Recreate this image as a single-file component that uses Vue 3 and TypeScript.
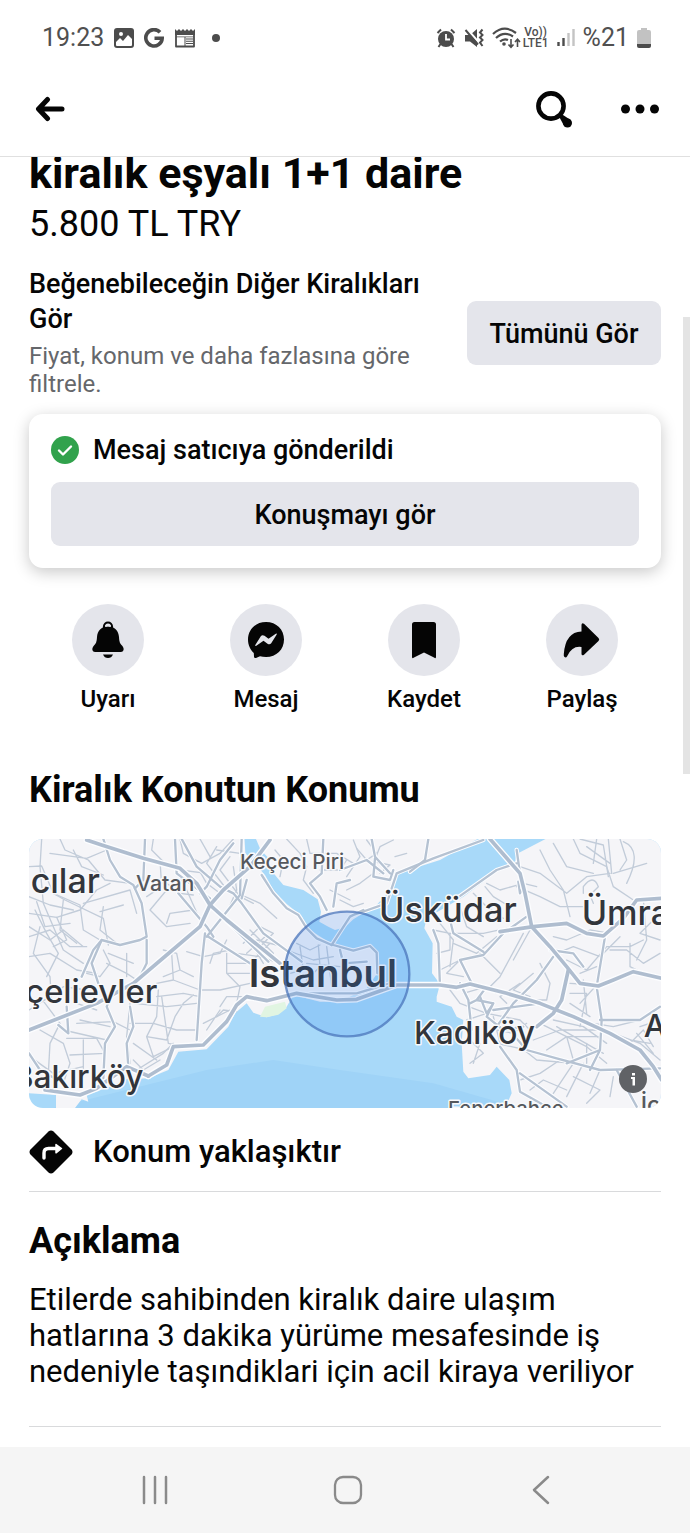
<script setup lang="ts">
interface MapLabel {
  text: string
  x: number
  y: number
  size: number
  weight: number
}

const actions = [
  { id: 'alert', label: 'Uyarı' },
  { id: 'message', label: 'Mesaj' },
  { id: 'save', label: 'Kaydet' },
  { id: 'share', label: 'Paylaş' },
]

const land = [
  'M0 0H672L676 70L700 95L735 135L760 180L800 222L845 258L862 290L885 310L920 332L955 347L1000 362L1050 348L1070 365L1072 430L1040 475L960 515L900 515L820 495L800 530L775 552L740 562L700 548L680 520L645 550L625 590L560 658L475 665L445 720L385 745L320 748L270 770L200 795L205 815L185 808L165 834H108V795L27 790H0Z',
  'M705 20L722 60L742 80L750 115L765 135L790 165L850 180L893 208L903 245L898 275L925 290L945 300L975 292L1000 268L1070 225L1110 180L1135 130L1260 90L1385 20Z',
  'M1590 20L1490 72L1484 102L1430 118L1390 155L1330 200L1220 265L1213 295L1238 340L1236 430L1260 462L1250 500L1250 515L1295 530L1310 560L1330 570L1325 640L1330 725L1345 745L1410 735L1430 710L1468 750L1475 790L1455 834H1960V0H1600Z',
]

const minorRoads = [
  'M27 110L65 108L100 190L135 210L250 265L265 345M65 27L60 110L70 220L100 290L130 360L190 400M27 200L90 225L160 240M27 250L110 262L180 240L230 180L270 160',
  'M90 70L200 85L260 60M120 27L135 60L205 90L255 150L330 160M160 60L185 110L250 135M100 190L180 225L190 300L240 330M45 240L80 310L115 370L80 440',
  'M27 320L90 300L150 350L200 350M27 380L90 370L170 420L230 430M60 290L40 370L90 440L95 520M110 262L140 330L100 350M27 290L90 330L130 300L190 350M50 215L75 290L150 280M130 210L120 300L170 340',
  'M190 220L330 180L350 250M250 230L240 300L290 340M310 225L240 245M380 150L440 160L480 190L520 195M420 90L425 170L380 200M375 80L480 120L560 130M400 27L395 60L440 105',
  'M470 120L500 180L540 270M440 180L390 240L440 290L510 280M520 90L560 160L600 190M590 50L560 100L610 165M480 27L490 70L545 100L600 70L640 27M540 27L570 80',
  'M630 80L600 120L660 200L700 220M640 110L650 180L620 250M665 195L720 220L770 265M590 60L660 70M520 240L450 250L440 280',
  'M430 360L470 370L480 420L520 440M455 370L460 450L410 460M500 365L550 380L600 370L620 330M460 450L540 480L600 480L690 460M480 420L430 440',
  'M415 480L410 560L380 620L440 630L465 560L490 520L520 495M340 520L440 530L530 520M330 580L400 580L470 600L530 600M410 500L490 490L540 500M425 500L445 640L490 650M380 620L400 680L460 650',
  'M620 370L620 430L660 470L650 520M620 400L690 400M620 430L690 430M600 530L620 500L680 500M590 560L610 540L650 545M570 400L580 370L630 360',
  'M670 340L720 290L760 310L720 350M680 310L745 380M690 300L760 370M710 330L770 345M650 370L720 380L780 400M700 350L730 400M735 320L680 370M750 340L700 390',
  'M27 540L90 500L130 470L200 480M60 600L130 640L150 700L130 760M130 600L260 630M140 625L230 625L255 670L150 675M60 500L120 580L90 640L85 730M30 680L100 730L190 710',
  'M160 470L170 520L230 540M170 580L280 575L330 600M180 570L270 590M190 630L190 740M260 400L320 430L350 450M250 360L270 400L240 440L200 430M320 370L320 440M265 370L340 400',
  'M330 520L320 620L330 700M350 720L430 670L460 640M340 640L410 690M340 690L370 720L420 690M560 600L600 540M550 580L630 540',
  'M765 60L790 90L780 140M800 27L840 70L860 110L850 150L880 190M860 27L870 70L950 70L1000 100M980 180L1020 160L1060 130M1000 30L1020 80L980 140M900 120L960 120L980 90',
  'M1010 55L1040 90L1070 70L1040 30M1060 95L1110 105L1080 130M1120 30L1080 50L1060 100M1125 80L1160 70M960 210L1000 230L1030 220M930 180L990 210',
  'M830 340L870 360L900 345M800 360L880 390L940 380M840 350L850 420L810 430M895 345L900 410L860 450M920 350L935 470M860 400L960 410',
  'M1240 300L1290 310L1290 360L1250 370M1260 280L1300 330L1290 410M1290 310L1390 310L1460 295M1320 230L1340 290L1390 320M1360 190L1400 230L1450 265M1395 170L1420 200L1470 230M1300 340L1370 370L1430 320',
  'M1260 420L1320 390M1320 390L1280 430L1330 440M1510 310L1440 440L1410 470M1530 300L1480 390M1380 370L1440 430M1400 160L1440 180L1510 160L1550 170',
  'M1500 110L1560 130L1640 190L1700 140L1770 130M1490 170L1560 200L1620 230L1690 230M1560 60L1590 120L1630 180L1650 260M1600 40L1640 110L1720 130M1660 27L1680 70L1760 110L1780 170L1840 210',
  'M1680 27L1750 45L1765 140M1700 50L1770 100M1730 27L1720 100M1765 27L1775 130M1800 27L1820 90L1800 120M1690 190L1690 170Q1720 130 1735 170L1710 195L1720 220M1780 130L1880 100M1810 35Q1870 60 1820 160',
  'M1600 320L1640 330L1710 300L1770 310M1610 370L1660 350L1740 380L1800 320M1640 390L1700 420L1760 350L1830 350L1870 330M1680 430L1730 410M1770 360L1820 360L1870 400L1920 370M1830 340L1830 410L1870 430M1870 210L1880 330L1850 390M1910 260L1860 310L1920 330',
  'M1560 400L1590 460L1580 510L1530 510M1540 430L1480 480L1530 500M1650 460L1730 465L1680 520M1650 490L1700 490L1680 590M1690 450L1700 550M1650 520L1710 560M1720 580L1780 590L1860 570M1500 460L1440 500L1460 520',
  'M1330 490L1400 470L1430 490M1290 480L1320 520L1400 550M1340 570L1400 550L1500 570L1530 600M1380 640L1360 700M1420 560L1440 640M1350 630L1390 670L1350 700M1430 600L1480 610L1520 580M1430 640L1520 660',
  'M1560 580L1700 650L1760 700M1600 570L1690 590L1760 640M1540 630L1620 600L1740 600M1580 660L1640 620L1660 690M1640 620L1740 620M1610 590L1750 670M1660 700L1600 790M1690 700L1640 800M1740 720L1710 790',
  'M1500 750L1560 730L1620 690M1530 780L1570 750L1640 780M1660 740L1740 780L1700 820M1780 740L1770 800M1500 650L1550 690L1660 700M1700 640L1700 700M1780 610L1860 640L1920 690M1830 640L1870 600L1900 650M1850 610L1900 670M1860 590L1920 570M1830 630L1890 640',
]

const streets = [
  'M250 27L270 90L300 140L340 165L365 220L380 320L360 330L300 345L245 330L220 360L185 440',
  'M375 27L370 150L345 175M465 27L470 130L570 205M485 27L530 110L600 170L640 190L665 220L730 310L845 395',
  'M640 40L600 90L560 170L540 190M665 27L660 195L560 320M245 330L215 400L235 460M565 320L690 400M565 220L745 395M475 190L560 290L580 320',
  'M555 310L545 400L530 630M285 470L260 530L285 590L255 640L250 745M330 530L340 590L320 640L325 710M140 530L145 610L115 585',
  'M27 670L60 720L130 760M380 330L380 400L345 470M680 150L665 205M725 135L760 190L800 235L835 255L860 295L890 325L935 345',
  'M910 27L905 130L870 160L900 200L920 240M990 150L950 160L940 230M1055 27L1065 80L1110 130M1225 27L1215 90L1170 125M960 120L1040 90L1090 130M1065 85L1060 140L1110 150L1120 120',
  'M1000 255L1100 220L1130 130L1240 85L1390 30M935 345L990 260L1030 240M940 345L1000 362L1050 348L1070 368L1072 430M960 360L970 400L1040 395M870 490L1010 490L1110 460',
  'M1240 300L1255 340L1260 470M1290 270L1300 310L1390 365M1490 100L1430 120L1310 205M1510 170L1500 190L1495 155M1490 60L1500 130M1320 390L1390 375L1450 310L1520 260M1320 390L1355 460',
  'M1320 460L1345 510L1355 600M1400 470L1370 510L1350 520M1370 510L1420 520L1400 550L1380 500M1420 520L1400 560L1450 600L1510 590',
  'M1420 540L1560 520M1600 380L1550 450L1480 520L1430 590M1755 320L1730 470L1745 570L1740 660L1710 720M1740 570L1860 570L1920 530M1790 720L1850 830M1740 660L1640 700',
  'M1485 620L1520 660L1610 685L1740 720L1920 715M1440 650L1490 720L1500 785L1580 830M1500 730L1640 830M1690 410L1660 370L1590 360',
]

const highways = [
  'M200 30L245 45L370 85L480 115L530 160L570 225L620 270L780 400',
  'M750 30L690 110L610 180L570 225L540 290L440 375L340 460L230 520L27 600',
  'M385 738L440 705L460 650L550 645L620 575L650 525L680 500L740 512L830 490L950 510L1010 508L1130 465L1260 465L1310 472L1350 462L1460 490L1560 520L1660 560L1770 610L1860 660L1900 710L1925 750',
  'M75 780L180 795L230 775L320 710L385 738',
  'M1410 27L1500 130L1515 190L1535 290L1590 350L1640 410L1680 460L1735 468L1780 450L1840 425L1925 445',
  'M1440 305L1540 290L1640 280L1700 310L1750 318L1810 265L1850 210L1925 205M1645 420L1625 510L1600 550L1550 590',
]

const labels: MapLabel[] = [
  { text: 'cılar', x: 32, y: 190, size: 102, weight: 500 },
  { text: 'Vatan', x: 348, y: 183, size: 64, weight: 500 },
  { text: 'Keçeci Piri', x: 660, y: 117, size: 62, weight: 500 },
  { text: 'Üsküdar', x: 1077, y: 275, size: 103, weight: 500 },
  { text: 'Ümraniye', x: 1685, y: 285, size: 103, weight: 500 },
  { text: 'Istanbul', x: 686, y: 470, size: 115, weight: 600 },
  { text: 'çelievler', x: 16, y: 518, size: 98, weight: 500 },
  { text: 'Bakırköy', x: -22, y: 775, size: 95, weight: 500 },
  { text: 'Kadıköy', x: 1182, y: 642, size: 95, weight: 500 },
  { text: 'A', x: 1871, y: 620, size: 95, weight: 500 },
  { text: 'Fenerbahçe', x: 1284, y: 858, size: 61, weight: 500 },
  { text: 'İç', x: 1862, y: 848, size: 70, weight: 500 },
]
</script>

<template>
  <div class="phone">
    <div class="status">
      <div class="status-side">
        <span class="clock">19:23</span>
        <svg width="20" height="20" viewBox="0 0 20 20">
          <rect width="20" height="20" rx="3" fill="#4c4c4c" />
          <circle cx="7" cy="6" r="2" fill="#fff" />
          <path d="M2 14L6 10L9 13L14 7L18 11V17Q18 18 17 18H3Q2 18 2 17Z" fill="#fff" />
        </svg>
        <svg width="20" height="20" viewBox="0 0 20 20">
          <path d="M16 4.2A8.2 8.2 0 1 0 18.2 10.2H10.5" fill="none" stroke="#4c4c4c" stroke-width="3.6" />
        </svg>
        <svg width="22" height="20" viewBox="0 0 22 20">
          <path d="M2 3V18.500H20V3" fill="none" stroke="#4c4c4c" stroke-width="1.800" stroke-linejoin="round" />
          <path d="M1 7V1L3 3L5 1L7 3L9 1L11 3L13 1L15 3L17 1L19 3L21 1V7ZM12 10.500H19V11.500H12ZM12 12.800H19V13.800H12ZM12 15.100H19V16.100H12ZM10.500 9H11.500V18H10.500ZM2 8.500H20V9.300H2Z" fill="#4c4c4c" />
        </svg>
        <span class="dot"></span>
      </div>
      <div class="status-side status-right">
        <svg width="20" height="20" viewBox="0 0 20 20">
          <circle cx="10" cy="11" r="8" fill="#4c4c4c" />
          <path d="M1.500 5L5 1.500M18.500 5L15 1.500M4.500 16L2.500 19M15.500 16L17.500 19" stroke="#4c4c4c" stroke-width="2" />
          <path d="M10 6V11.500H14" fill="none" stroke="#fff" stroke-width="1.800" />
        </svg>
        <svg width="20" height="20" viewBox="0 0 20 20">
          <path d="M1 7H6L13 1V19L6 13.500H1Z" fill="#4c4c4c" />
          <path d="M2 0L14 13.500" stroke="#fff" stroke-width="2.400" />
          <path d="M1.500 2L14 16.500M18.500 1.500L16 4.500L18.500 7L16 9.500L18.500 12L16 14.500L18.500 18" fill="none" stroke="#4c4c4c" stroke-width="2" />
        </svg>
        <div class="network">
          <svg width="29" height="22" viewBox="0 0 29 22">
            <path d="M1 7Q12 -3 24 6M4 11Q12 3.500 21 9.500M8 14.500Q12 11 16 13" fill="none" stroke="#4c4c4c" stroke-width="2.200" />
            <circle cx="12" cy="17" r="1.800" fill="#4c4c4c" />
            <path d="M19 12V20M16.500 17.500L19 20.300L21.500 17.500M25.500 20V12.500M23 15L25.500 12.200L28 15" fill="none" stroke="#4c4c4c" stroke-width="1.600" />
          </svg>
          <span class="lte"><span>Vo))</span><span>LTE1</span></span>
        </div>
        <svg width="18" height="19" viewBox="0 0 18 19">
          <path d="M1.500 14V18M6.500 10V18" stroke="#4c4c4c" stroke-width="2.400" />
          <path d="M11.500 5V18M16.500 1V18" stroke="#c4c4c4" stroke-width="2.400" />
        </svg>
        <span class="battery-text">%21</span>
        <svg width="14" height="20" viewBox="0 0 14 20">
          <path d="M4 0H10V2H12Q14 2 14 4V16H0V4Q0 2 2 2H4Z" fill="#c2c2c2" />
          <path d="M0 16H14V18Q14 20 12 20H2Q0 20 0 18Z" fill="#4c4c4c" />
        </svg>
      </div>
    </div>

    <header class="topbar">
      <button class="icon-button" type="button" aria-label="Geri">
        <svg width="30" height="26" viewBox="0 0 30 26">
          <path d="M12.500 3.500L3.500 13L12.500 22.500M4 13H27" fill="none" stroke="#050505" stroke-width="5" stroke-linecap="round" stroke-linejoin="round" />
        </svg>
      </button>
      <div class="topbar-right">
        <button class="icon-button" type="button" aria-label="Ara">
          <svg width="38" height="38" viewBox="0 0 38 38">
            <circle cx="16" cy="16" r="12.600" fill="none" stroke="#050505" stroke-width="4.600" />
            <circle cx="32.500" cy="33" r="4.500" fill="#050505" />
            <path d="M24 26.500L26.500 24L36 30.200L29.300 36.200Z" fill="#050505" />
          </svg>
        </button>
        <button class="icon-button" type="button" aria-label="Diğer">
          <svg width="38" height="10" viewBox="0 0 38 10">
            <circle cx="4.500" cy="5" r="4.500" fill="#050505" />
            <circle cx="19" cy="5" r="4.500" fill="#050505" />
            <circle cx="33.500" cy="5" r="4.500" fill="#050505" />
          </svg>
        </button>
      </div>
    </header>

    <main class="content">
      <h1 class="title">kiralık eşyalı 1+1 daire</h1>
      <p class="price">5.800 TL TRY</p>

      <section class="more">
        <div class="more-text">
          <h2 class="more-title">Beğenebileceğin Diğer Kiralıkları Gör</h2>
          <p class="more-sub">Fiyat, konum ve daha fazlasına göre filtrele.</p>
        </div>
        <button class="gray-button see-all" type="button">Tümünü Gör</button>
      </section>

      <section class="card">
        <div class="card-row">
          <svg width="28" height="28" viewBox="0 0 28 28">
            <circle cx="14" cy="14" r="14" fill="#31a24c" />
            <path d="M8 14.500L12 18.500L20 10.500" fill="none" stroke="#fff" stroke-width="2.400" stroke-linecap="round" stroke-linejoin="round" />
          </svg>
          <span>Mesaj satıcıya gönderildi</span>
        </div>
        <button class="gray-button" type="button">Konuşmayı gör</button>
      </section>

      <nav class="actions">
        <button v-for="action in actions" :key="action.id" class="action" type="button">
          <span class="action-circle">
            <svg width="40" height="40" viewBox="0 0 40 40">
              <template v-if="action.id === 'alert'">
                <path d="M16 8V6.500A4 4 0 0 1 24 6.500V8" fill="none" stroke="#050505" stroke-width="2.200" />
                <path d="M20 6.500C27 6.500 30.500 11 31 17C31.300 22 32 23.500 34 25.500C37 29 35.500 32 33 32H7C4.500 32 3 29 6 25.500C8 23.500 8.700 22 9 17C9.500 11 13 6.500 20 6.500Z" fill="#050505" />
                <path d="M17.300 6.200Q20 4.500 22.700 6.200" fill="none" stroke="#e4e5eb" stroke-width="1.600" />
                <path d="M15 34.500H25Q23.500 38 20 38T15 34.500Z" fill="#050505" />
              </template>
              <template v-else-if="action.id === 'message'">
                <path d="M20 2C30.500 2 38 9.500 38 19.500S30.500 37 20 37C17.800 37 15.800 36.700 14 36.200L10 38Q8 38.500 8 36.500L7.800 33C4.200 29.800 2 25 2 19.500C2 9.500 9.500 2 20 2Z" fill="#050505" />
                <path d="M9.300 25L14.800 16.200Q16.300 14.300 18.500 15.800L22.500 18.700L29.800 13.800Q31.300 13 30.700 14.500L25.200 23.200Q23.700 25.200 21.500 23.700L17.500 20.800L10.300 25.800Q8.900 26.400 9.300 25Z" fill="#e4e5eb" />
              </template>
              <path v-else-if="action.id === 'save'" d="M10.500 2H29.500Q32 2 32 4.500V37Q32 39 30 37.500L20 32.500L10 37.500Q8 39 8 37V4.500Q8 2 10.500 2Z" fill="#050505" />
              <path v-else d="M19.500 11.500V4.800Q19.800 2.200 22 3.800L36.500 18Q38 19.500 36.500 21L22 34.800Q19.800 36.200 19.500 34V27Q10 25.500 5 36.500Q4 38 2.500 37Q1.500 36.500 1.800 34Q3.500 12 19.500 11.500Z" fill="#050505" />
            </svg>
          </span>
          <span class="action-label">{{ action.label }}</span>
        </button>
      </nav>

      <h2 class="section-title">Kiralık Konutun Konumu</h2>
      <div class="map">
        <svg class="map-art" viewBox="27 27 1896 807" preserveAspectRatio="xMidYMid slice">
          <rect x="0" y="0" width="1960" height="860" fill="#a8d9f9" />
          <path d="M560 720L760 690L960 720L1240 760L1500 834H100Z" fill="#9fd3f7" />
          <path v-for="d in land" :key="d" :d="d" fill="#f5f5f8" />
          <path d="M720 560L735 530L795 515L800 535L775 554L740 562Z" fill="#e1f5e2" />
          <g fill="none" stroke-linejoin="round" stroke-linecap="round">
            <path v-for="d in minorRoads" :key="d" :d="d" stroke="#c2ccd9" stroke-width="4" />
            <path v-for="d in streets" :key="'edge' + d" :d="d" stroke="#fcfdff" stroke-width="13" />
            <path v-for="d in streets" :key="d" :d="d" stroke="#b5c2d2" stroke-width="7" />
            <path v-for="d in highways" :key="'edge' + d" :d="d" stroke="#fcfdff" stroke-width="19" />
            <path v-for="d in highways" :key="d" :d="d" stroke="#afbdcf" stroke-width="11" />
          </g>
          <text
            v-for="label in labels"
            :key="label.text"
            class="map-label"
            :x="label.x"
            :y="label.y"
            :font-size="label.size"
            :font-weight="label.weight"
            :fill="label.size < 80 ? '#55585d' : '#32353b'"
          >{{ label.text }}</text>
          <circle cx="981" cy="432" r="187" fill="#2f80f0" fill-opacity="0.18" stroke="#4a74bb" stroke-opacity="0.75" stroke-width="7" />
        </svg>
        <button class="info" type="button" aria-label="Bilgi">
          <svg width="28" height="28" viewBox="0 0 28 28">
            <circle cx="14" cy="14" r="14" fill="#606266" />
            <path d="M13 8H16V10.500H13ZM12 12H16V20.500H13.500V14H12Z" fill="#fff" />
          </svg>
        </button>
      </div>

      <div class="approx">
        <svg width="44" height="44" viewBox="0 0 44 44">
          <path d="M19.500 1.500Q22 -0.500 24.500 1.500L42.500 19.500Q44.500 22 42.500 24.500L24.500 42.500Q22 44.500 19.500 42.500L1.500 24.500Q-0.500 22 1.500 19.500Z" fill="#050505" />
          <path d="M15 28V23Q15 18.500 19.500 18.500H28" fill="none" stroke="#fff" stroke-width="3.400" stroke-linecap="round" />
          <path d="M27 14.500L32.500 18.500L27 22.800Z" fill="#fff" stroke="#fff" stroke-width="1.500" stroke-linejoin="round" />
        </svg>
        <span>Konum yaklaşıktır</span>
      </div>

      <section class="about">
        <h2 class="section-title about-title">Açıklama</h2>
        <p class="about-text">Etilerde sahibinden kiralık daire ulaşım hatlarına 3 dakika yürüme mesafesinde iş nedeniyle taşındiklari için acil kiraya veriliyor</p>
      </section>
      <div class="scrollbar"></div>
    </main>

    <footer class="navbar">
      <button class="nav-button" type="button" aria-label="Son uygulamalar">
        <svg width="30" height="30" viewBox="0 0 30 30">
          <path d="M4 2V28M15 2V28M26 2V28" stroke="#8a8a8a" stroke-width="2.500" stroke-linecap="round" />
        </svg>
      </button>
      <button class="nav-button" type="button" aria-label="Ana ekran">
        <svg width="30" height="30" viewBox="0 0 30 30">
          <rect x="2" y="2" width="26" height="26" rx="8" fill="none" stroke="#8a8a8a" stroke-width="2.300" />
        </svg>
      </button>
      <button class="nav-button" type="button" aria-label="Geri dön">
        <svg width="30" height="30" viewBox="0 0 30 30">
          <path d="M22 2L8 15L22 28" fill="none" stroke="#8a8a8a" stroke-width="2.500" stroke-linecap="round" stroke-linejoin="round" />
        </svg>
      </button>
    </footer>
  </div>
</template>

<style>
body {
  margin: 0;
  background: #fff;
}
</style>

<style scoped>
.phone {
  display: flex;
  flex-direction: column;
  min-height: 100vh;
  background: #fff;
  color: #050505;
  font-family: Roboto, "Noto Sans", sans-serif;
}
h1,
h2,
p {
  margin: 0;
}
svg {
  display: block;
  flex: none;
}
button {
  padding: 0;
  border: 0;
  background: none;
  color: inherit;
  font-family: inherit;
}
.status {
  display: flex;
  justify-content: space-between;
  align-items: center;
  height: 75px;
  padding: 0 39px 0 42px;
  color: #505050;
}
.status-side {
  display: flex;
  align-items: center;
  gap: 10px;
}
.status-right {
  gap: 8px;
}
.clock,
.battery-text {
  font-size: 25px;
  line-height: 32px;
  font-weight: 400;
}
.dot {
  width: 8px;
  height: 8px;
  margin-left: 6px;
  border-radius: 50%;
  background: #4c4c4c;
}
.network {
  display: flex;
  align-items: center;
  gap: 2px;
}
.lte {
  display: flex;
  flex-direction: column;
  align-items: center;
  font-size: 12px;
  line-height: 11px;
  font-weight: 500;
}
.topbar {
  display: flex;
  justify-content: space-between;
  align-items: center;
  height: 68px;
  padding: 0 31px 13px 35px;
  border-bottom: 1px solid #e0e0e0;
}
.topbar-right {
  display: flex;
  align-items: center;
  gap: 48px;
}
.content {
  position: relative;
  flex: 1;
  padding: 0 29px;
  overflow: hidden;
}
.title {
  font-size: 43px;
  line-height: 32px;
  font-weight: 700;
}
.price {
  margin-top: 11px;
  font-size: 36px;
  line-height: 48px;
}
.more {
  display: flex;
  align-items: center;
  gap: 28px;
  margin-top: 19px;
}
.more-text {
  flex: 1;
}
.more-title {
  font-size: 27px;
  line-height: 35px;
  font-weight: 500;
}
.more-sub {
  margin-top: 5px;
  font-size: 24px;
  line-height: 28px;
  color: #65676b;
}
.gray-button {
  width: 100%;
  height: 64px;
  padding-top: 2px;
  border-radius: 9px;
  background: #e4e5eb;
  font-size: 27px;
  font-weight: 500;
}
.see-all {
  flex: none;
  width: 194px;
}
.card {
  margin-top: 16px;
  padding: 18px 22px 22px;
  border-radius: 14px;
  background: #fff;
  box-shadow: 0 4px 16px rgba(0, 0, 0, 0.22);
}
.card-row {
  display: flex;
  align-items: center;
  gap: 14px;
  margin-bottom: 14px;
  font-size: 27px;
  line-height: 36px;
  font-weight: 500;
}
.actions {
  display: grid;
  grid-template-columns: repeat(4, 1fr);
  margin-top: 36px;
}
.action {
  display: flex;
  flex-direction: column;
  align-items: center;
  gap: 8px;
}
.action-circle {
  display: flex;
  align-items: center;
  justify-content: center;
  width: 72px;
  height: 72px;
  border-radius: 50%;
  background: #e4e5eb;
}
.action-label {
  font-size: 24px;
  line-height: 30px;
  font-weight: 500;
}
.section-title {
  margin-top: 54px;
  font-size: 36px;
  line-height: 44px;
  font-weight: 700;
}
.map {
  position: relative;
  height: 269px;
  margin-top: 27px;
  border-radius: 14px;
  overflow: hidden;
}
.map-art {
  width: 100%;
  height: 100%;
}
.map-label {
  font-family: Inter, sans-serif;
  stroke: #f8f9fb;
  stroke-width: 9px;
  stroke-linejoin: round;
  paint-order: stroke;
}
.info {
  position: absolute;
  right: 14px;
  bottom: 15px;
}
.approx {
  display: flex;
  align-items: center;
  gap: 20px;
  padding: 22px 0 17px;
  border-bottom: 1px solid #d9dadc;
  font-size: 31px;
  line-height: 44px;
  font-weight: 500;
}
.about {
  padding-bottom: 36px;
  border-bottom: 1px solid #d9dadc;
}
.about-title {
  margin-top: 27px;
}
.about-text {
  margin-top: 19px;
  font-size: 31px;
  line-height: 36px;
}
.scrollbar {
  position: absolute;
  top: 160px;
  right: 0;
  width: 7px;
  height: 457px;
  background: #e4e4e4;
}
.navbar {
  display: grid;
  grid-template-columns: repeat(3, 1fr);
  align-items: center;
  height: 86px;
  padding: 0 52px 0 58px;
  background: #f5f5f5;
}
.nav-button {
  display: flex;
  justify-content: center;
}
</style>
